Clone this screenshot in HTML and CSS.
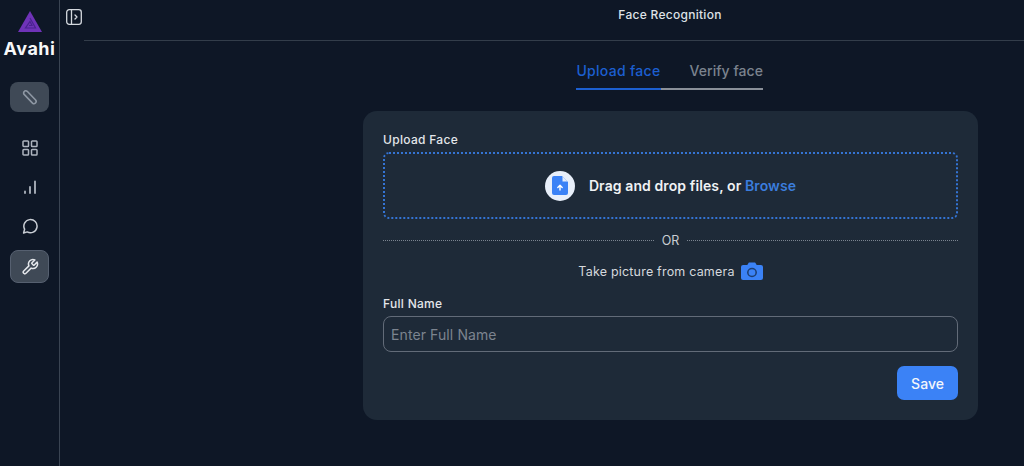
FILE: index.html
```html
<!DOCTYPE html>
<html lang="en">
<head>
    <meta charset="UTF-8">
    <title>Face Recognition</title>
    <link rel="stylesheet" href="styles.css">
</head>
<body>
    <aside class="sidebar">
        <svg class="logo" width="24" height="21" viewBox="0 0 24 21">
            <path d="M12 0 L24 21 H0 Z" fill="#6f33b8"/>
            <path d="M12 7 L17.5 17 H7.5 L12 10.5 L14 14.5 H11" fill="none" stroke="#4a2390" stroke-width="1.2"/>
        </svg>
        <div class="brand">Avahi</div>
        <div class="side-btn clip-btn">
            <svg width="18" height="18" viewBox="0 0 18 18" fill="none" stroke="#8e97a3" stroke-width="1.6" stroke-linecap="round">
                <path d="M3.2 3.6 a2 2 0 0 1 3 -0.3 L14.6 12 a2.2 2.2 0 0 1 -3.1 3.1 L3.4 6.6 a2 2 0 0 1 -0.2 -3 Z"/>
            </svg>
        </div>
        <div class="side-item first">
            <svg width="16" height="16" viewBox="0 0 16 16" fill="none" stroke="#aeb5bf" stroke-width="1.5">
                <rect x="1" y="1" width="5.5" height="5.5" rx="0.8"/>
                <rect x="9.5" y="1" width="5.5" height="5.5" rx="0.8"/>
                <rect x="1" y="9.5" width="5.5" height="5.5" rx="0.8"/>
                <rect x="9.5" y="9.5" width="5.5" height="5.5" rx="0.8"/>
            </svg>
        </div>
        <div class="side-item">
            <svg width="16" height="16" viewBox="0 0 16 16" fill="none" stroke="#aeb5bf" stroke-width="1.8" stroke-linecap="round">
                <path d="M3 14 V12.5"/>
                <path d="M8 14 V8"/>
                <path d="M13 14 V2.5"/>
            </svg>
        </div>
        <div class="side-item">
            <svg width="16" height="16" viewBox="0 0 16 16" fill="none" stroke="#c9ced5" stroke-width="1.5" stroke-linejoin="round">
                <path d="M1.6 15 L2.6 11.2 A6.6 6.6 0 1 1 5.2 13.9 Z"/>
            </svg>
        </div>
        <div class="side-btn tool-btn">
            <svg width="18" height="18" viewBox="0 0 24 24" fill="none" stroke="#e4e7eb" stroke-width="2" stroke-linecap="round" stroke-linejoin="round">
                <path d="M14.7 6.3a1 1 0 0 0 0 1.4l1.6 1.6a1 1 0 0 0 1.4 0l3.77-3.77a6 6 0 0 1-7.94 7.94l-6.91 6.91a2.12 2.12 0 0 1-3-3l6.91-6.91a6 6 0 0 1 7.94-7.94l-3.76 3.76z"/>
            </svg>
        </div>
    </aside>
    <div class="main">
        <header class="topbar">
            <div class="toggle">
                <svg width="16" height="16" viewBox="0 0 16 16" fill="none" stroke="#d5d9df" stroke-width="1.3">
                    <rect x="0.7" y="0.7" width="14.6" height="14.6" rx="2.5"/>
                    <path d="M5.5 1 V15"/>
                    <path d="M9 6 L11 8 L9 10" stroke-linecap="round" stroke-linejoin="round"/>
                </svg>
            </div>
            <div class="title-wrap">
                <div class="title">Face Recognition</div>
            </div>
        </header>
        <div class="tabs">
            <div class="tab active">Upload face</div>
            <div class="tab">Verify face</div>
        </div>
        <div class="card-row">
            <div class="card">
                <label class="field-label">Upload Face</label>
                <div class="dropzone">
                    <span class="file-badge">
                        <svg width="16" height="19" viewBox="0 0 16 19">
                            <path d="M2 0 H10 L16 6 V17 a2 2 0 0 1 -2 2 H2 a2 2 0 0 1 -2 -2 V2 a2 2 0 0 1 2 -2 Z" fill="#3b82f6"/>
                            <path d="M10.5 0.5 V5.5 H15.5 Z" fill="#e4edfb"/>
                            <path d="M8 14 V9.5 M5.8 11.4 L8 9.2 L10.2 11.4" fill="none" stroke="#fff" stroke-width="1.4" stroke-linecap="round" stroke-linejoin="round"/>
                        </svg>
                    </span>
                    <span class="drop-text">Drag and drop files, or <span class="browse">Browse</span></span>
                </div>
                <div class="or-row">
                    <span class="or-line"></span>
                    <span class="or-text">OR</span>
                    <span class="or-line"></span>
                </div>
                <div class="camera-row">
                    <span>Take picture from camera</span>
                    <svg width="22" height="18" viewBox="0 0 21 18" preserveAspectRatio="none">
                        <path d="M2 3 H6 L7.5 0.5 H13.5 L15 3 H19 a2 2 0 0 1 2 2 V16 a2 2 0 0 1 -2 2 H2 a2 2 0 0 1 -2 -2 V5 a2 2 0 0 1 2 -2 Z" fill="#3b82f6"/>
                        <circle cx="10.5" cy="10.5" r="4" fill="none" stroke="#1d3f73" stroke-width="1.5"/>
                    </svg>
                </div>
                <label class="field-label name-label">Full Name</label>
                <input class="name-input" type="text" placeholder="Enter Full Name">
                <div class="actions">
                    <button class="save-btn">Save</button>
                </div>
            </div>
        </div>
    </div>
</body>
</html>
```

FILE: styles.css
```css
html, body {
    height: 100%;
}
body {
    margin: 0;
    background-color: #0e1726;
    color: #fff;
    font-family: Inter, "Open Sans", sans-serif;
    display: flex;
    overflow: hidden;
}
.sidebar {
    width: 59px;
    height: 466px;
    border-right: 1px solid #3a4452;
    display: flex;
    flex-direction: column;
    align-items: center;
    padding-top: 11px;
    box-sizing: content-box;
}
.brand {
    font-size: 18px;
    font-weight: 700;
    letter-spacing: 0.5px;
    line-height: 20px;
    margin-top: 7px;
    color: #f7f8f9;
}
.side-btn {
    width: 39px;
    height: 31px;
    border-radius: 8px;
    background-color: #3f4956;
    display: flex;
    align-items: center;
    justify-content: center;
    box-sizing: border-box;
}
.clip-btn {
    margin-top: 23px;
    height: 30px;
}
.tool-btn {
    height: 33px;
    margin-top: 5px;
    border: 1px solid #566070;
}
.side-item {
    height: 39px;
    width: 39px;
    display: flex;
    align-items: center;
    justify-content: center;
}
.side-item.first {
    margin-top: 16px;
}
.main {
    flex: 1;
    display: flex;
    flex-direction: column;
}
.topbar {
    height: 41px;
    display: flex;
    box-sizing: border-box;
}
.toggle {
    width: 24px;
    padding: 9px 0 0 6px;
    box-sizing: border-box;
    flex-shrink: 0;
}
.title-wrap {
    flex: 1;
    border-bottom: 1px solid #333d4a;
    display: flex;
    justify-content: center;
    padding: 7px 0 0 232px;
}
.title {
    font-size: 12px;
    font-weight: 500;
    letter-spacing: 0.28px;
    line-height: 15px;
    color: #dfe2e6;
}
.tabs {
    display: flex;
    align-self: flex-end;
    margin: 20px 261px 0 0;
}
.tab {
    font-size: 14px;
    font-weight: 500;
    line-height: 20px;
    height: 29px;
    box-sizing: border-box;
    color: #7b838e;
    border-bottom: 2px solid #8a9099;
    padding-left: 29px;
    letter-spacing: 0.05px;
}
.tab.active {
    color: #1c5fd0;
    border-bottom-color: #1c5fd0;
    padding: 0;
    letter-spacing: 0.3px;
}
.card-row {
    display: flex;
    padding: 21px 46px 0 0;
    justify-content: flex-end;
}
.card {
    width: 615px;
    height: 309px;
    background-color: #1e2a38;
    border-radius: 14px;
    padding: 21px 20px 20px;
    box-sizing: border-box;
    display: flex;
    flex-direction: column;
}
.field-label {
    font-size: 12px;
    font-weight: 500;
    line-height: 16px;
    color: #e3e6ea;
    letter-spacing: 0.3px;
}
.dropzone {
    height: 67px;
    margin-top: 4px;
    border: 2px dotted #3474d4;
    border-radius: 6px;
    box-sizing: border-box;
    display: flex;
    align-items: center;
    justify-content: center;
    gap: 14px;
}
.file-badge {
    width: 30px;
    height: 30px;
    border-radius: 50%;
    background-color: #e8effa;
    display: flex;
    align-items: center;
    justify-content: center;
}
.drop-text {
    font-size: 14px;
    font-weight: 600;
    letter-spacing: 0.1px;
    color: #f0f2f4;
}
.browse {
    color: #3b7ddd;
}
.or-row {
    display: flex;
    align-items: center;
    gap: 7px;
    margin-top: 12px;
    height: 18px;
}
.or-line {
    flex: 1;
    border-top: 1px dotted #7b8490;
}
.or-text {
    font-size: 12.5px;
    color: #c9cdd3;
    padding: 0 1px;
}
.camera-row {
    display: flex;
    align-items: center;
    justify-content: center;
    gap: 6px;
    margin-top: 12px;
    height: 20px;
    font-size: 12.5px;
    letter-spacing: 0.2px;
    color: #d5d8dd;
}
.name-label {
    margin-top: 15px;
}
.name-input {
    margin-top: 4px;
    height: 36px;
    background: transparent;
    border: 1px solid #626b78;
    border-radius: 8px;
    padding: 0 7px;
    font-family: inherit;
    font-size: 14px;
    letter-spacing: 0.1px;
    color: #fff;
    box-sizing: border-box;
    width: 100%;
}
.name-input::placeholder {
    color: #7c848f;
    opacity: 1;
}
.actions {
    display: flex;
    justify-content: flex-end;
    margin-top: 14px;
}
.save-btn {
    width: 61px;
    height: 34px;
    background-color: #3b82f6;
    border: none;
    border-radius: 7px;
    color: #f3f6fb;
    font-family: inherit;
    font-size: 14px;
    font-weight: 500;
}
```
